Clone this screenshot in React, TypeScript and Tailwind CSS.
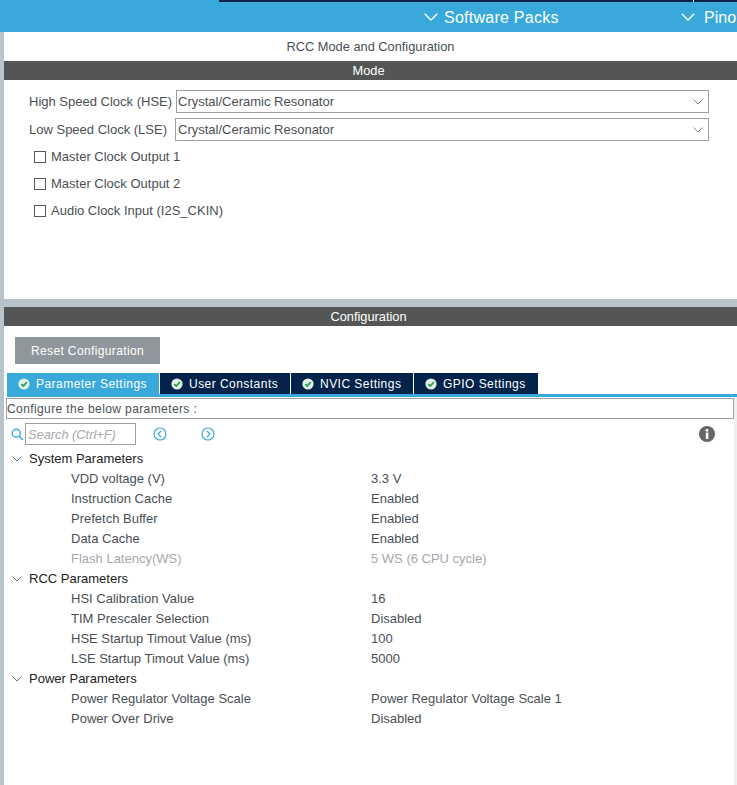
import React from "react";

const font = "font-['Liberation_Sans',Arial,sans-serif]";

function Check() {
  return (
    <svg width="12" height="12" viewBox="0 0 12 12" className="shrink-0">
      <circle cx="6" cy="6" r="5.6" fill="#dff0e4" />
      <path d="M3.2 6.1 L5.3 8 L8.8 4.2" fill="none" stroke="#2f9e5f" strokeWidth="1.8" />
    </svg>
  );
}

function Chevron({ color = "#6b7280", size = 10 }: { color?: string; size?: number }) {
  return (
    <svg width={size} height={size * 0.6} viewBox="0 0 10 6" className="shrink-0">
      <path d="M0.5 0.5 L5 5 L9.5 0.5" fill="none" stroke={color} strokeWidth="1" />
    </svg>
  );
}

function Select({ pad }: { pad: string }) {
  return (
    <div className={`flex h-[23px] items-center justify-between border border-[#9aa0a6] bg-white pr-[5px] pt-px text-[13px] text-[#4a4f55] ${pad}`}>
      <span>Crystal/Ceramic Resonator</span>
      <Chevron color="#7c8288" size={10} />
    </div>
  );
}

function Box({ label }: { label: string }) {
  return (
    <div className="flex h-[27px] items-center pl-[30px] text-[13px] text-[#4a4f55]">
      <span className="h-[12px] w-[12px] border border-[#555]" />
      <span className="ml-[5px] pt-px">{label}</span>
    </div>
  );
}

function Tab({ label, w, active }: { label: string; w: string; active?: boolean }) {
  return (
    <div className={`flex h-[21px] items-center gap-[6px] pl-[11px] text-[12px] tracking-[0.46px] text-white ${w} ${active ? "bg-[#39a9dc]" : "bg-[#03234b]"}`}>
      <Check />
      <span className="pt-px">{label}</span>
    </div>
  );
}

function Group({ title }: { title: string }) {
  return (
    <div className="flex h-5 items-center pl-[12px] text-[13px] text-[#222]">
      <Chevron color="#6b7280" size={10} />
      <span className="ml-[7px]">{title}</span>
    </div>
  );
}

function Row({ k, v, dim }: { k: string; v: string; dim?: boolean }) {
  return (
    <div className={`flex h-5 items-center text-[13px] ${dim ? "text-[#a4a8ac]" : "text-[#4a4f55]"}`}>
      <span className="ml-[71px] w-[300px]">{k}</span>
      <span>{v}</span>
    </div>
  );
}

function Arrow({ d }: { d: string }) {
  return (
    <svg width="14" height="14" viewBox="0 0 14 14" className="shrink-0">
      <circle cx="7" cy="7" r="6" fill="none" stroke="#39a9dc" strokeWidth="1.2" />
      <path d={d} fill="none" stroke="#39a9dc" strokeWidth="1.2" />
    </svg>
  );
}

export default function App() {
  return (
    <div className={`h-[785px] w-[737px] overflow-hidden bg-white ${font}`}>
      <div className="h-8 bg-[#39a9dc]">
        <div className="ml-[219px] flex h-[2px] bg-[#03234b]">
          <div className="ml-[474px] w-px bg-white" />
        </div>
        <div className="flex h-[30px] items-center whitespace-nowrap text-[16px] text-white">
          <span className="ml-[424px]"><Chevron color="#ffffff" size={14} /></span>
          <span className="ml-[6px] w-[237px] pt-px tracking-[0.25px]">Software Packs</span>
          <Chevron color="#ffffff" size={14} />
          <span className="ml-[9px] pt-px">Pino</span>
        </div>
      </div>

      <div className="flex h-[753px]">
        <div className="w-1 shrink-0 bg-[#b9c4ca]" />
        <div className="flex min-w-0 flex-1 flex-col">
          <div className="flex h-[29px] items-center justify-center pt-px text-[12.8px] text-[#4a4f55]">RCC Mode and Configuration</div>
          <div className="flex h-[19px] items-center justify-center bg-[#535655] pr-[4px] pt-px text-[12.8px] text-white">Mode</div>

          <div className="h-[219px] pl-[25px] pr-[28px] pt-[10px]">
            <div className="flex items-center text-[13px] text-[#4a4f55]">
              <span className="w-[147px] whitespace-nowrap pt-px">High Speed Clock (HSE)</span>
              <div className="flex-1"><Select pad="pl-px" /></div>
            </div>
            <div className="mt-[5px] flex items-center text-[13px] text-[#4a4f55]">
              <span className="w-[146px] whitespace-nowrap pt-px">Low Speed Clock (LSE)</span>
              <div className="flex-1"><Select pad="pl-[2px]" /></div>
            </div>
            <div className="-ml-[25px] mt-[2px]">
              <Box label="Master Clock Output 1" />
              <Box label="Master Clock Output 2" />
              <Box label="Audio Clock Input (I2S_CKIN)" />
            </div>
          </div>

          <div className="h-2 bg-[#b9c4ca]" />
          <div className="flex h-[19px] items-center justify-center bg-[#535655] pr-[4px] pt-px text-[12.8px] text-white">Configuration</div>

          <div className="pl-[11px] pt-[11px]">
            <div className="flex h-[27px] w-[145px] items-center justify-center bg-[#90979c] pt-px text-[12px] tracking-[0.37px] text-white">Reset Configuration</div>
          </div>

          <div className="ml-[3px] mt-[9px] flex gap-px">
            <Tab label="Parameter Settings" w="w-[152px]" active />
            <Tab label="User Constants" w="w-[130px]" />
            <Tab label="NVIC Settings" w="w-[122px]" />
            <Tab label="GPIO Settings" w="w-[124px]" />
          </div>
          <div className="ml-[3px] flex flex-1 border-t-[3px] border-[#39a9dc]">
            <div className="min-w-0 flex-1">
              <div className="ml-[-1px] mt-px flex h-[21px] items-center border border-[#9aa0a6] pt-px text-[12px] tracking-[0.4px] text-[#4a4f55]">Configure the below parameters :</div>
              <div className="flex h-[30px] items-center">
                <svg width="13" height="13" viewBox="0 0 13 13" className="ml-[4px] shrink-0">
                  <circle cx="5.2" cy="5.2" r="4" fill="none" stroke="#39a9dc" strokeWidth="1.4" />
                  <path d="M8.2 8.2 L12 12" stroke="#39a9dc" strokeWidth="1.6" />
                </svg>
                <div className="ml-px flex h-[22px] w-[111px] items-center border border-[#9aa0a6] pl-[2px] pt-px text-[12.8px] italic text-[#a4a8ac]">Search (Ctrl+F)</div>
                <span className="ml-[17px]"><Arrow d="M8 4 L5 7 L8 10" /></span>
                <span className="ml-[34px]"><Arrow d="M6 4 L9 7 L6 10" /></span>
                <svg width="16" height="16" viewBox="0 0 16 16" className="ml-[484px] shrink-0">
                  <circle cx="8" cy="8" r="8" fill="#666" />
                  <rect x="6.8" y="6.6" width="2.6" height="6.4" fill="#fff" />
                  <circle cx="8" cy="4.2" r="1.5" fill="#fff" />
                </svg>
              </div>
              <div className="-ml-[7px]">
                <Group title="System Parameters" />
                <Row k="VDD voltage (V)" v="3.3 V" />
                <Row k="Instruction Cache" v="Enabled" />
                <Row k="Prefetch Buffer" v="Enabled" />
                <Row k="Data Cache" v="Enabled" />
                <Row k="Flash Latency(WS)" v="5 WS (6 CPU cycle)" dim />
                <Group title="RCC Parameters" />
                <Row k="HSI Calibration Value" v="16" />
                <Row k="TIM Prescaler Selection" v="Disabled" />
                <Row k="HSE Startup Timout Value (ms)" v="100" />
                <Row k="LSE Startup Timout Value (ms)" v="5000" />
                <Group title="Power Parameters" />
                <Row k="Power Regulator Voltage Scale" v="Power Regulator Voltage Scale 1" />
                <Row k="Power Over Drive" v="Disabled" />
              </div>
            </div>
            <div className="w-[3px] shrink-0 bg-[#f0f0f0]" />
          </div>
        </div>
      </div>
    </div>
  );
}
